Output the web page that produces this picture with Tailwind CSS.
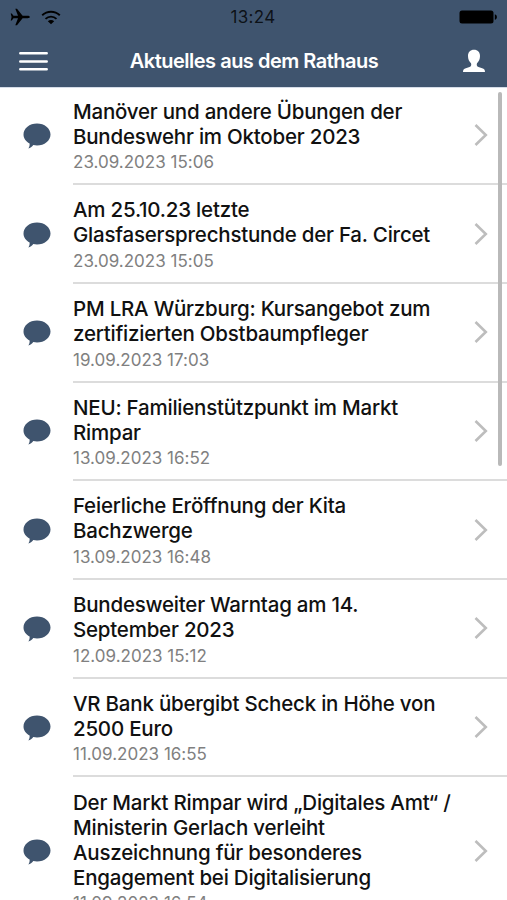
<!DOCTYPE html>
<html lang="de">
<head>
<meta charset="utf-8">
<title>Aktuelles aus dem Rathaus</title>
<script src="https://cdn.jsdelivr.net/npm/@tailwindcss/browser@4"></script>
</head>
<body class="h-[900px] w-[507px] overflow-hidden bg-white font-['Inter','Liberation_Sans',sans-serif]">
<svg class="hidden">
  <symbol id="bubble" viewBox="0 0 28 26"><path fill="#3f546e" d="M14 .5C21.500.5 27.500 5.300 27.500 11.500S21.500 22.500 14 22.500c-1.300 0-2.500-.1-3.700-.4C9 24 7.200 25.300 5.300 25.400c1-1.100 1.500-2.700 1.300-4.800C2.900 18.600.5 15.300.5 11.500.5 5.300 6.500.5 14 .5Z"/></symbol>
  <symbol id="chevron" viewBox="0 0 14 22"><path fill="none" stroke="#bdbdbd" stroke-width="2.600" d="M1.500 1l10.300 10L1.500 21"/></symbol>
</svg>
<div class="flex h-[900px] flex-col overflow-hidden">
  <header class="h-[88px] shrink-0 border-b border-[#d5dce8] bg-[#3f546e]">
    <div class="grid h-[34px] grid-cols-3 items-center pr-[9px] pl-[10px] text-black">
      <div class="flex items-center gap-[11px]">
        <svg class="h-[18px] w-[20px]" viewBox="0 0 20 18"><path d="M19.800 9c0 .8-1 1.200-2.200 1.200h-5L7 17.300H5.300L8 10.200H3.500L1.800 12.500H.7L1.600 9 .7 5.500h1.100l1.700 2.300H8L5.300.7H7l5.600 7.100h5c1.200 0 2.200.4 2.200 1.200Z"/></svg>
        <svg class="h-[15px] w-[20px]" viewBox="0 0 20 15"><g fill="none" stroke="#000" stroke-width="1.900"><path d="M1.200 5.300c5-4.700 12.600-4.700 17.600 0"/><path d="M4.500 8.900c3.200-3 7.800-3 11 0"/></g><path d="M10 14.300l-3.200-3.100c1.800-1.500 4.600-1.500 6.400 0Z"/></svg>
      </div>
      <div class="-ml-[2px] pt-[2px] text-center text-[17px] tracking-[0.3px] text-black/80">13:24</div>
      <div class="flex items-center justify-end"><svg class="h-[16px] w-[40px]" viewBox="0 0 40 16"><rect x="1.500" y="1.500" width="34" height="13" rx="2.500"/><path d="M36.800 5.200c2.800.8 2.800 4.800 0 5.600Z"/></svg></div>
    </div>
    <div class="flex h-[53px] items-center justify-between pr-[21px] pl-[19px]">
      <svg class="h-[20px] w-[29px]" viewBox="0 0 29 20"><path stroke="#fff" stroke-width="2.500" stroke-linecap="round" d="M1.300 2.300h26.400M1.300 10.500h26.400M1.300 18.300h26.400"/></svg>
      <h1 class="-ml-[2px] text-[20px] font-semibold tracking-[-0.5px] whitespace-nowrap text-white">Aktuelles aus dem Rathaus</h1>
      <svg class="h-[24px] w-[24px]" viewBox="0 0 24 24"><path fill="#fff" d="M12 .8c3.800 0 6 2.400 6 6.200 0 3-1.200 5.700-3 7.200-.6 1.700-.2 3.200 1.500 3.900l4.400 1.500c1.500.5 2.100 1.700 2.100 3.400H1c0-1.700.6-2.900 2.100-3.400l4.400-1.500c1.700-.7 2.100-2.200 1.500-3.900C7.200 12.700 6 10 6 7 6 3.200 8.200.8 12 .8Z"/></svg>
    </div>
  </header>
  <main id="list" class="-mt-[1.400px] flex flex-col"></main>
</div>
<div class="absolute top-[92px] left-[498px] h-[374px] w-[4px] rounded-full bg-[#b9b9b9]"></div>
<script>
const items = [
  [["Manöver und andere Übungen der", "Bundeswehr im Oktober 2023"], "23.09.2023 15:06"],
  [["Am 25.10.23 letzte", "Glasfasersprechstunde der Fa. Circet"], "23.09.2023 15:05"],
  [["PM LRA Würzburg: Kursangebot zum", "zertifizierten Obstbaumpfleger"], "19.09.2023 17:03"],
  [["NEU: Familienstützpunkt im Markt", "Rimpar"], "13.09.2023 16:52"],
  [["Feierliche Eröffnung der Kita", "Bachzwerge"], "13.09.2023 16:48"],
  [["Bundesweiter Warntag am 14.", "September 2023"], "12.09.2023 15:12"],
  [["VR Bank übergibt Scheck in Höhe von", "2500 Euro"], "11.09.2023 16:55"],
  [["Der Markt Rimpar wird „Digitales Amt“ /", "Ministerin Gerlach verleiht", "Auszeichnung für besonderes", "Engagement bei Digitalisierung"], "11.09.2023 16:54"]
];
document.getElementById("list").innerHTML = items.map(([lines, date]) => `
  <article class="flex shrink-0 items-stretch">
    <div class="flex w-[73px] items-center pl-[23px]"><svg class="h-[26px] w-[28px]"><use href="#bubble"/></svg></div>
    <div class="flex flex-1 items-center border-b-2 border-[#dcdcdc] pr-[19px]">
      <div class="flex-1 pt-[12.200px] pb-[9.900px]">
        <h2 class="text-[20.500px] leading-[25px] font-medium tracking-[-0.220px] whitespace-nowrap text-[#111]">${lines.map(l => `<span class="block">${l}</span>`).join("")}</h2>
        <time class="block pt-[2.600px] text-[17px] leading-[22px] tracking-[0.010px] text-[#808080]">${date}</time>
      </div>
      <svg class="h-[22px] w-[14px]"><use href="#chevron"/></svg>
    </div>
  </article>`).join("");
</script>
</body>
</html>
